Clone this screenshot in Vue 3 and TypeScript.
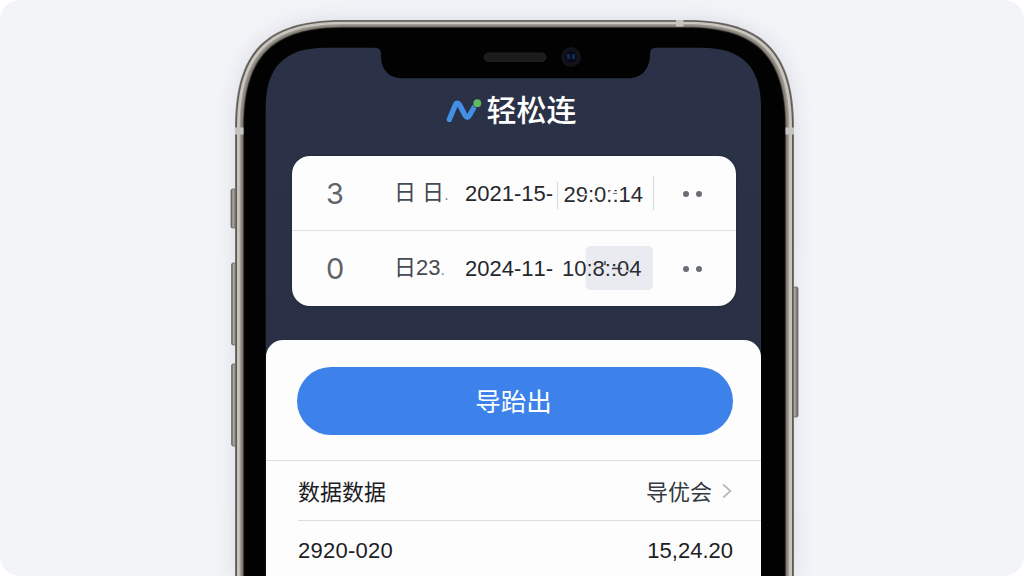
<script setup lang="ts">
interface Layer { d: string; fill: string }
interface Entry { count: string; label: string; mark: string; date: string }

const corner = (x1: number, x2: number, y: number, l: number, c: number): string =>
  `M${x1} 580V${y + l}C${x1} ${y + c} ${x1 + c} ${y} ${x1 + l} ${y}` +
  `H${x2 - l}C${x2 - c} ${y} ${x2} ${y + c} ${x2} ${y + l}V580Z`

const bands: [number, string][] = [
  [0, '#77736f'], [0.9, '#5d5955'], [2, '#c6c2bc'], [3.6, '#d2cec8'], [4.6, '#a39e96'],
  [6, '#8a857d'], [7.8, '#59554f'], [8.6, '#161514'], [9.4, '#020203'],
]
const layers: Layer[] = bands.map(([inset, fill]) => ({
  d: corner(235 + inset, 794 - inset, 20 + inset * 0.88, 108 - inset, 31 - inset * 0.25),
  fill,
}))
const display = corner(265.7, 761, 47.7, 60, 19)
const keys = [
  { x: 231, y: 189, h: 39 }, { x: 231.6, y: 263, h: 82 }, { x: 231.6, y: 364, h: 82 }, { x: 792.5, y: 287, h: 130 },
]
const entries: Entry[] = [
  { count: '3', label: '日 日', mark: '.', date: '2021-15-' },
  { count: '0', label: '日23', mark: '.', date: '2024-11-' },
]
</script>

<template>
  <main class="stage">
    <svg class="device" viewBox="0 0 1024 576" aria-hidden="true">
      <defs>
        <filter id="halo" x="-20%" y="-20%" width="140%" height="140%"><feGaussianBlur stdDeviation="10" /></filter>
        <linearGradient id="navy" x1="0" y1="0" x2="0" y2="1">
          <stop offset="0" stop-color="#2b3247" /><stop offset="1" stop-color="#282f43" />
        </linearGradient>
        <linearGradient id="key" x1="0" x2="1">
          <stop offset="0" stop-color="#5f5d5a" /><stop offset=".35" stop-color="#aaa7a1" /><stop offset="1" stop-color="#6d6a66" />
        </linearGradient>
      </defs>
      <path :d="layers[0].d" fill="#b9bdc8" opacity=".45" filter="url(#halo)" />
      <rect v-for="k in keys" :key="k.y" :x="k.x" :y="k.y" width="5.5" :height="k.h" rx="1.5" fill="url(#key)" stroke="#5b5956" stroke-width=".7" />
      <path v-for="(l, i) in layers" :key="i" :d="l.d" :fill="l.fill" />
      <path d="M235 127.5h8.5v7H235zM785.500 127.500h8.500v7h-8.500zM676 20h7.500v6.500H676z" fill="#c7c4c0" />
      <path :d="display" fill="url(#navy)" />
      <path d="M375 46.500v1.300q6 0 6 6v2C381 70 389 78.300 403 78.300H628C642 78.300 650 69 650 54q0-6.200 6-6.200v-1.300z" fill="#020203" />
      <rect x="484" y="53" width="62" height="8.500" rx="4.200" fill="#1b1b1d" stroke="#29292b" stroke-width=".7" />
      <circle cx="571" cy="57" r="10" fill="#121318" />
      <circle cx="571" cy="57" r="6" fill="#070b18" />
      <path d="M567 54h3v5h-3zM572 54h3v5h-3z" fill="#122b55" />
    </svg>

    <section class="screen">
      <header class="brand">
        <svg class="logo" viewBox="0 0 36 28" aria-hidden="true">
          <path d="M3.300 25.500L9.200 11.200Q11.200 7.200 13.800 11.200L19.300 21.700Q21.300 25 23.300 21.700L28.300 13" fill="none" stroke="#438fe5" stroke-width="5.300" stroke-linecap="round" stroke-linejoin="round" />
          <circle cx="31.200" cy="9.600" r="4.300" fill="#2b3247" />
          <circle cx="31.300" cy="9.200" r="3.900" fill="#61b962" />
        </svg>
        <h1>轻松连</h1>
      </header>

      <div class="card">
        <div v-for="(e, i) in entries" :key="i" class="entry">
          <span class="count">{{ e.count }}</span>
          <span class="label">{{ e.label }}<i>{{ e.mark }}</i></span>
          <span class="date">{{ e.date }}</span>
          <svg v-if="i === 0" class="time" viewBox="0 0 102 74">
            <path d="M2.500 26v27M98.500 20v34" stroke="#dcdde1" stroke-width="1.300" />
            <text x="8.500" y="46">29:0::14</text>
            <path d="M26 38.500h6M39 40.500h8M54 36h13" stroke="#fdfdfd" stroke-width="1.500" />
            <path d="M58 37.500h4" stroke="#70757b" stroke-width="1.200" />
          </svg>
          <svg v-else class="time" viewBox="0 0 102 74">
            <rect x="30.500" y="15" width="67.500" height="44" rx="5" fill="#eaebf0" />
            <text x="7" y="45">10:8::04</text>
            <path d="M57 37.500h10M50 30v4" stroke="#383b40" stroke-width="1.400" />
            <path d="M39 35h4M68 40h5" stroke="#eaebf0" stroke-width="1.300" />
          </svg>
          <span class="dots"><b /><b /></span>
        </div>
      </div>

      <div class="sheet">
        <button class="export"><span>导跆出</span></button>
        <div class="row first">
          <span class="cjk">数据数据</span>
          <span class="value"><span class="cjk">导优会</span>
            <svg viewBox="0 0 10 16" aria-hidden="true"><path d="M1.200 1.500L8.500 8L1.200 14.500" fill="none" stroke="#b8b9bd" stroke-width="1.700" /></svg>
          </span>
        </div>
        <div class="row second"><span class="num">2920-020</span><span class="num sum">15,24.20</span></div>
      </div>
    </section>
  </main>
</template>

<style>
body { margin: 0; background: #fff; }
</style>
<style scoped>
.stage { position: relative; width: 1024px; height: 576px; overflow: hidden; border-radius: 20px; background: #f3f4f8; font-family: "Liberation Sans", "Noto Sans CJK SC", sans-serif; font-kerning: none; }
.device { position: absolute; inset: 0; width: 1024px; height: 576px; }
.screen { position: relative; width: 495px; margin-left: 266px; padding-top: 86px; }
.brand { display: flex; justify-content: center; align-items: center; height: 44px; gap: 5px; padding-right: 5px; }
.logo { width: 36px; height: 28px; }
h1 { margin: -1px 0 0; color: #fff; font: 500 30px/44px "Noto Sans CJK SC", sans-serif; }
.card { width: 444px; height: 150px; margin: 26px 0 0 26px; border-radius: 18px; background: #fdfdfd; overflow: hidden; box-shadow: 0 0 2px #171f31; }
.entry { display: grid; grid-template-columns: 102px 71px 90px 102px 1fr; height: 74px; align-items: center; color: #24272c; }
.entry + .entry { border-top: 1px solid #dfe0e2; }
.count { padding: 1px 0 0 34px; font-family: Inter, sans-serif; font-size: 29px; color: #606469; }
.label { padding-top: 2px; font-size: 22px; line-height: 30px; color: #454b52; white-space: nowrap; }
.label i { font-style: normal; color: #85898e; font-size: 16px; }
.date { padding-top: 1px; font-size: 22px; white-space: nowrap; }
.time { width: 102px; height: 74px; }
.time text { font: 22px "Liberation Sans", sans-serif; font-kerning: none; fill: #292c31; }
.dots { display: flex; gap: 7px; padding: 1px 0 0 26px; }
.dots b { width: 6px; height: 6px; border-radius: 50%; background: #696d74; }
.sheet { height: 236px; margin-top: 34px; border-radius: 17px 17px 0 0; background: #fdfdfd; overflow: hidden; }
.export { display: block; width: 436px; height: 68px; margin: 27px 0 25px 31px; padding: 0 3px 2px 0; border: 0; border-radius: 34px; background: #3c82ea; color: #fff; font: 400 25.500px/66px "Noto Sans CJK SC", sans-serif; }
.row { display: flex; align-items: center; justify-content: space-between; height: 59px; padding-right: 29px; border-top: 1px solid #dcdddf; color: #1c2024; font-size: 22px; }
.first { padding-left: 32px; }
.second { margin-left: 32px; }
.cjk { padding-bottom: 2px; font: 22px/30px "Noto Sans CJK SC", sans-serif; }
.num { padding-top: 1px; font-size: 22px; letter-spacing: .25px; }
.sum { margin-right: -1px; letter-spacing: 0; }
.value { display: flex; align-items: center; gap: 10px; color: #343a40; }
.value svg { width: 10px; height: 16px; }
</style>
